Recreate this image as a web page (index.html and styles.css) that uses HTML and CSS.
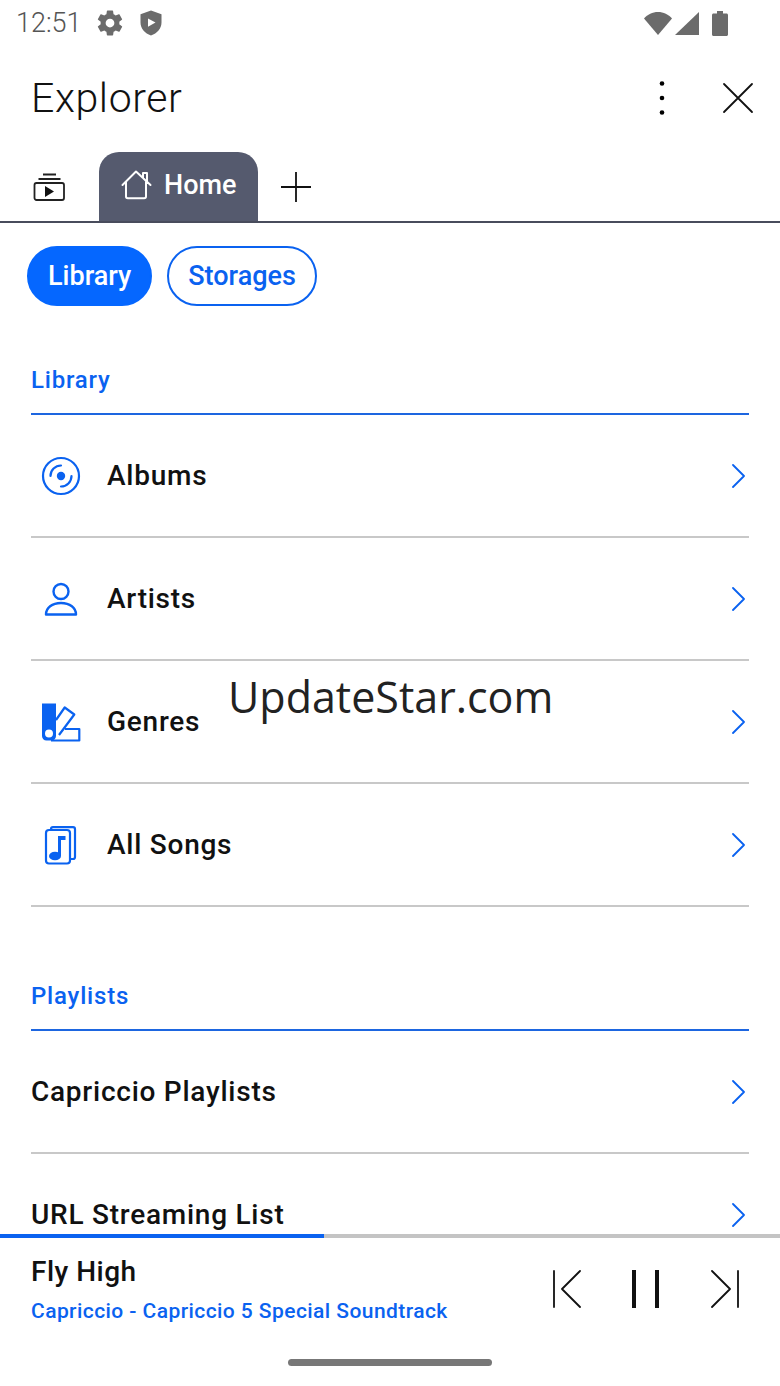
FILE: index.html
```html
<!DOCTYPE html>
<html lang="en">

<head>
    <meta charset="UTF-8">
    <meta name="viewport" content="width=device-width, initial-scale=1.0">
    <title>Explorer</title>
    <link rel="stylesheet" href="styles.css">
</head>

<body>
    <div class="app">
        <div class="status">
            <div class="status-left">
                <span class="clock">12:51</span>
                <!-- settings gear -->
                <svg class="st-gear" width="30" height="30" viewBox="0 0 24 24"><path fill="#6b6b6b" d="M19.4 13c.04-.32.1-.66.1-1s-.06-.68-.1-1l2.100-1.650c.2-.15.25-.42.12-.64l-2-3.460c-.12-.22-.39-.3-.61-.22l-2.490 1c-.52-.4-1.080-.73-1.690-.98l-.38-2.650A.49.49 0 0 0 14 2h-4c-.25 0-.46.18-.49.42l-.38 2.650c-.61.25-1.170.59-1.690.98l-2.490-1a.5.5 0 0 0-.61.22l-2 3.460c-.13.22-.07.49.12.64L4.560 11c-.04.32-.06.66-.06 1s.02.68.06 1l-2.100 1.650c-.2.15-.25.42-.12.64l2 3.460c.12.22.39.3.61.22l2.490-1c.52.4 1.080.73 1.690.98l.38 2.650c.03.24.24.42.49.42h4c.25 0 .46-.18.49-.42l.38-2.650c.61-.25 1.170-.59 1.690-.98l2.490 1c.22.08.49 0 .61-.22l2-3.460c.12-.22.07-.49-.12-.64L19.400 13zM12 15.500a3.500 3.500 0 1 1 0-7 3.500 3.500 0 0 1 0 7z"/></svg>
                <!-- shield with play mark -->
                <svg width="22" height="26" viewBox="0 0 22 26"><path fill="#6b6b6b" fill-rule="evenodd" d="M11 .5 21.500 4.200v8.300c0 6-4.400 10.900-10.500 13C4.900 23.400.5 18.500.5 12.500V4.200L11 .5zM8 8.500v8.200l7.500-4.100L8 8.500z"/></svg>
            </div>
            <div class="status-right">
                <svg class="st-wifi" width="28" height="24" viewBox="0 0 28 24"><path fill="#6b6b6b" d="M0 7.500C3.500 3.500 8.500 1 14 1s10.500 2.500 14 6.500L14 24 0 7.500z"/></svg>
                <svg class="st-signal" width="24" height="24" viewBox="0 0 24 24"><path fill="#6b6b6b" d="M24 1v23H0L24 1z"/></svg>
                <svg width="16" height="25" viewBox="0 0 16 25"><path fill="#6b6b6b" d="M5 0h6v2.500h3.500c.8 0 1.500.7 1.500 1.500v19.500c0 .8-.7 1.500-1.500 1.500h-13C.7 25 0 24.300 0 23.500V4c0-.8.7-1.500 1.500-1.500H5V0z"/></svg>
            </div>
        </div>

        <div class="header">
            <div class="title">Explorer</div>
            <div class="header-btns">
                <svg width="8" height="38" viewBox="0 0 8 38"><circle cx="4" cy="4.500" r="2.300"/><circle cx="4" cy="19" r="2.300"/><circle cx="4" cy="33.500" r="2.300"/></svg>
                <svg width="32" height="32" viewBox="0 0 32 32"><path fill="none" stroke="#111" stroke-width="1.800" stroke-linecap="round" d="M2 2l28 28M30 2 2 30"/></svg>
            </div>
        </div>

        <div class="tabs">
            <div class="tab-queue">
                <svg width="32" height="28" viewBox="0 0 32 28"><g fill="none" stroke="#222" stroke-width="1.800"><path d="M10 1.500h13M5.500 6h22"/><rect x="1.500" y="10" width="29.500" height="17" rx="2"/></g><path fill="#111" d="M12 13v11l9-5.500z"/></svg>
            </div>
            <div class="tab-home">
                <svg width="32" height="30" viewBox="0 0 32 30"><path fill="none" stroke="#fff" stroke-width="2" stroke-linejoin="round" stroke-linecap="round" d="M1.500 15 15 1.500 29.500 15M5 12v14.500c0 1 .8 1.800 1.800 1.800h16.400c1 0 1.800-.8 1.800-1.800V12M22 8V3h4v9"/></svg>
                <span>Home</span>
            </div>
            <div class="tab-add">
                <svg width="30" height="30" viewBox="0 0 30 30"><path stroke="#111" stroke-width="1.800" d="M15 0v30M0 15h30"/></svg>
            </div>
        </div>

        <div class="content">
            <div class="pills">
                <div class="pill pill-on">Library</div>
                <div class="pill">Storages</div>
            </div>

            <div class="section first">Library</div>
            <div class="row">
                <svg class="row-icon" width="40" height="40" viewBox="0 0 40 40"><g fill="none" stroke="#0a62f0" stroke-width="2.200" stroke-linecap="round"><circle cx="20" cy="20" r="18"/><path d="M9.500 20A10.500 10.500 0 0 1 20 9.500M30.500 20A10.500 10.500 0 0 1 20 30.500"/></g><circle cx="20" cy="20" r="4.200" fill="#0a62f0"/></svg>
                <span class="row-name">Albums</span>
                <svg class="chev" width="16" height="24" viewBox="0 0 16 24"><path fill="none" stroke="#0a62f0" stroke-width="1.800" stroke-linecap="round" stroke-linejoin="round" d="M2 1l11 11L2 23"/></svg>
            </div>
            <div class="row">
                <svg class="row-icon" width="40" height="40" viewBox="0 0 40 40"><g fill="none" stroke="#0a62f0" stroke-width="2.400" stroke-linejoin="round"><circle cx="20" cy="12.500" r="7.500"/><path d="M5 35.500c0-6.500 6-11.500 15-11.500s15 5 15 11.500z"/></g></svg>
                <span class="row-name">Artists</span>
                <svg class="chev" width="16" height="24" viewBox="0 0 16 24"><path fill="none" stroke="#0a62f0" stroke-width="1.800" stroke-linecap="round" stroke-linejoin="round" d="M2 1l11 11L2 23"/></svg>
            </div>
            <div class="row">
                <svg class="row-icon" width="40" height="40" viewBox="0 0 40 40"><path fill="#0a62f0" fill-rule="evenodd" d="M1 1.500h14V34c0 2.500-2 4.500-4.500 4.500h-5C3 38.500 1 36.500 1 34V1.500zM8 27.500a4 4 0 1 0 0 8 4 4 0 0 0 0-8z"/><path fill="none" stroke="#0a62f0" stroke-width="2.200" stroke-linejoin="round" d="M15 18l8.700-12.500 9.600 7L18 33M24 27h14.300v11.500H10"/></svg>
                <span class="row-name">Genres</span>
                <svg class="chev" width="16" height="24" viewBox="0 0 16 24"><path fill="none" stroke="#0a62f0" stroke-width="1.800" stroke-linecap="round" stroke-linejoin="round" d="M2 1l11 11L2 23"/></svg>
            </div>
            <div class="row">
                <svg class="row-icon" width="40" height="40" viewBox="0 0 40 40"><g fill="none" stroke="#0a62f0" stroke-width="2.200" stroke-linejoin="round"><rect x="5" y="5" width="24" height="33.500" rx="3"/><path d="M10 5V4.200c0-1.200.8-2 2-2h20c1.200 0 2 .8 2 2V32c0 1.200-.8 2-2 2h-3"/></g><path fill="#0a62f0" d="M17 11h7.500v4H20v16h-3z"/><ellipse cx="14" cy="31" rx="6" ry="4.300" fill="#0a62f0"/></svg>
                <span class="row-name">All Songs</span>
                <svg class="chev" width="16" height="24" viewBox="0 0 16 24"><path fill="none" stroke="#0a62f0" stroke-width="1.800" stroke-linecap="round" stroke-linejoin="round" d="M2 1l11 11L2 23"/></svg>
            </div>

            <div class="section">Playlists</div>
            <div class="row">
                <span class="row-name">Capriccio Playlists</span>
                <svg class="chev" width="16" height="24" viewBox="0 0 16 24"><path fill="none" stroke="#0a62f0" stroke-width="1.800" stroke-linecap="round" stroke-linejoin="round" d="M2 1l11 11L2 23"/></svg>
            </div>
            <div class="row">
                <span class="row-name">URL Streaming List</span>
                <svg class="chev" width="16" height="24" viewBox="0 0 16 24"><path fill="none" stroke="#0a62f0" stroke-width="1.800" stroke-linecap="round" stroke-linejoin="round" d="M2 1l11 11L2 23"/></svg>
            </div>
        </div>

        <div class="progress"><div class="progress-fill"></div></div>
        <div class="player">
            <div class="track">
                <div class="track-name">Fly High</div>
                <div class="track-album">Capriccio - Capriccio 5 Special Soundtrack</div>
            </div>
            <div class="controls">
                <svg width="30" height="38" viewBox="0 0 30 38"><path fill="none" stroke="#111" stroke-width="1.800" stroke-linecap="round" stroke-linejoin="round" d="M2 1v36M28 1 10 19l18 18"/></svg>
                <svg width="28" height="38" viewBox="0 0 28 38"><path stroke="#111" stroke-width="4" d="M2 0v38M25 0v38"/></svg>
                <svg width="30" height="38" viewBox="0 0 30 38"><path fill="none" stroke="#111" stroke-width="1.800" stroke-linecap="round" stroke-linejoin="round" d="M28 1v36M2 1l18 18L2 37"/></svg>
            </div>
        </div>
        <div class="nav-bar"><div class="nav-handle"></div></div>

        <div class="stamp">UpdateStar.com</div>
    </div>
</body>

</html>
```

FILE: styles.css
```css
body {
    margin: 0;
    padding: 0;
    background-color: white;
    font-family: Roboto, "Noto Sans", sans-serif;
}

.app {
    position: relative;
    display: flex;
    flex-direction: column;
    height: 1386px;
    overflow: hidden;
}

.status {
    display: flex;
    justify-content: space-between;
    align-items: center;
    height: 46px;
    padding: 0 52px 0 16px;
}

.status-left {
    display: flex;
    align-items: center;
}

.status-right {
    display: flex;
    align-items: center;
}

.st-wifi {
    margin-right: 3px;
}

.st-signal {
    margin-right: 13px;
}

.clock {
    font-size: 27px;
    font-weight: 300;
    color: #555;
    margin-right: 13px;
}

.st-gear {
    margin-right: 15px;
}

.header {
    display: flex;
    justify-content: space-between;
    align-items: center;
    height: 106px;
    padding: 0 26px 2px 31px;
    box-sizing: border-box;
}

.title {
    font-size: 41px;
    font-weight: 300;
    color: #111;
    letter-spacing: .6px;
}

.header-btns {
    display: flex;
    align-items: center;
    gap: 56px;
}

.tabs {
    display: flex;
    align-items: flex-end;
    height: 71px;
    border-bottom: 2px solid #484c5c;
    box-sizing: border-box;
}

.tab-queue {
    width: 99px;
    height: 69px;
    padding-left: 33px;
    box-sizing: border-box;
    display: flex;
    align-items: center;
}

.tab-home {
    display: flex;
    align-items: center;
    gap: 11px;
    width: 159px;
    height: 69px;
    padding: 0 0 3px 22px;
    box-sizing: border-box;
    background-color: #555a6e;
    border-radius: 20px 20px 0 0;
    color: white;
    font-size: 27px;
    font-weight: 500;
}

.tab-add {
    height: 69px;
    padding-left: 23px;
    display: flex;
    align-items: center;
}

.content {
    flex: 1;
    overflow: hidden;
    min-height: 0;
}

.pills {
    display: flex;
    gap: 15px;
    padding: 23px 0 0 27px;
}

.pill {
    display: flex;
    align-items: center;
    height: 60px;
    padding: 0 19px;
    box-sizing: border-box;
    border: 2px solid #0a62f0;
    border-radius: 30px;
    color: #0a62f0;
    font-size: 27px;
    font-weight: 500;
}

.pill-on {
    background-color: #0567ff;
    border-color: #0567ff;
    color: white;
}

.section {
    margin: 62px 31px 0;
    height: 62px;
    line-height: 55px;
    box-sizing: border-box;
    border-bottom: 2px solid #1d66e0;
    color: #0a62f0;
    font-size: 24px;
    font-weight: 500;
    letter-spacing: .8px;
}

.section.first {
    margin-top: 47px;
}

.row {
    display: flex;
    align-items: center;
    height: 123px;
    margin: 0 31px;
    box-sizing: border-box;
    border-bottom: 2px solid #c8c8c8;
}

.row-icon {
    margin: 0 26px 0 10px;
}

.row-name {
    flex: 1;
    font-size: 28px;
    font-weight: 500;
    color: #111;
    letter-spacing: .75px;
}

.chev {
    margin-right: 2px;
}

.progress {
    height: 4px;
    background-color: #c4c4c4;
}

.progress-fill {
    height: 100%;
    width: 324px;
    background-color: #0a62f0;
}

.player {
    display: flex;
    justify-content: space-between;
    align-items: center;
    height: 116px;
    padding: 0 40px 14px 31px;
    box-sizing: border-box;
}

.track-name {
    font-size: 28px;
    font-weight: 500;
    color: #111;
    letter-spacing: .5px;
}

.track-album {
    margin-top: 11px;
    font-size: 21px;
    font-weight: 500;
    color: #0a62f0;
    letter-spacing: .43px;
}

.controls {
    display: flex;
    align-items: center;
    gap: 50px;
}

.nav-bar {
    height: 32px;
}

.nav-handle {
    width: 204px;
    height: 7px;
    margin: 5px auto 0;
    border-radius: 4px;
    background-color: #777;
}

/* site name printed across the list */
.stamp {
    position: absolute;
    left: 228px;
    top: 667px;
    font-family: "Open Sans", sans-serif;
    font-size: 43px;
    color: #222;
}
```
